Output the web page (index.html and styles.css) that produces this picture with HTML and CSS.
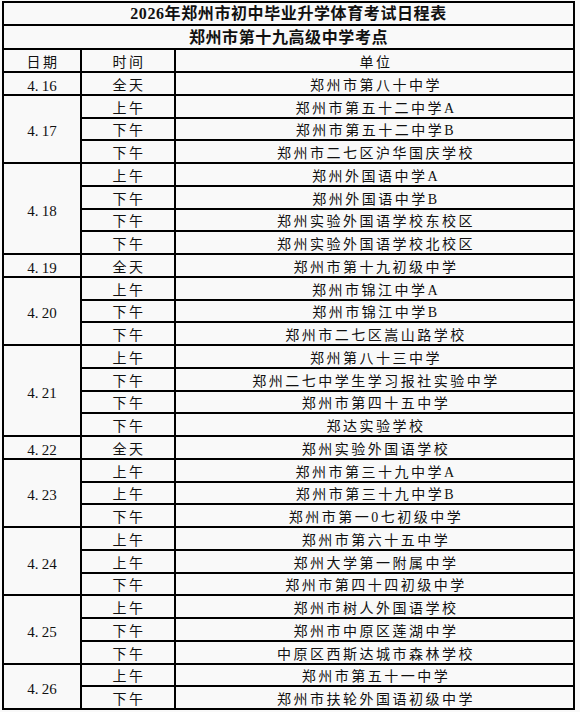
FILE: index.html
```html
<!DOCTYPE html>
<html lang="zh-CN">
<head>
<meta charset="utf-8">
<title>2026年郑州市初中毕业升学体育考试日程表</title>
<link rel="stylesheet" href="styles.css">
</head>
<body>
<table class="sched">
  <colgroup>
    <col class="c-date">
    <col class="c-time">
    <col class="c-unit">
  </colgroup>
  <tbody>
    <tr class="r-title"><td colspan="3" class="title">2026年郑州市初中毕业升学体育考试日程表</td></tr>
    <tr class="r-sub"><td colspan="3" class="title">郑州市第十九高级中学考点</td></tr>
    <tr class="r-head"><td>日期</td><td>时间</td><td class="unit">单位</td></tr>

    <tr><td class="date">4<span class="dot">.</span>16</td><td>全天</td><td class="unit">郑州市第八十中学</td></tr>

    <tr><td class="date" rowspan="3">4<span class="dot">.</span>17</td><td>上午</td><td class="unit">郑州市第五十二中学A</td></tr>
    <tr><td>下午</td><td class="unit">郑州市第五十二中学B</td></tr>
    <tr><td>下午</td><td class="unit">郑州市二七区沪华国庆学校</td></tr>

    <tr><td class="date" rowspan="4">4<span class="dot">.</span>18</td><td>上午</td><td class="unit">郑州外国语中学A</td></tr>
    <tr><td>下午</td><td class="unit">郑州外国语中学B</td></tr>
    <tr><td>下午</td><td class="unit">郑州实验外国语学校东校区</td></tr>
    <tr><td>下午</td><td class="unit">郑州实验外国语学校北校区</td></tr>

    <tr><td class="date">4<span class="dot">.</span>19</td><td>全天</td><td class="unit">郑州市第十九初级中学</td></tr>

    <tr><td class="date" rowspan="3">4<span class="dot">.</span>20</td><td>上午</td><td class="unit">郑州市锦江中学A</td></tr>
    <tr><td>下午</td><td class="unit">郑州市锦江中学B</td></tr>
    <tr><td>下午</td><td class="unit">郑州市二七区嵩山路学校</td></tr>

    <tr><td class="date" rowspan="4">4<span class="dot">.</span>21</td><td>上午</td><td class="unit">郑州第八十三中学</td></tr>
    <tr><td>下午</td><td class="unit">郑州二七中学生学习报社实验中学</td></tr>
    <tr><td>下午</td><td class="unit">郑州市第四十五中学</td></tr>
    <tr><td>下午</td><td class="unit">郑达实验学校</td></tr>

    <tr><td class="date">4<span class="dot">.</span>22</td><td>全天</td><td class="unit">郑州实验外国语学校</td></tr>

    <tr><td class="date" rowspan="3">4<span class="dot">.</span>23</td><td>上午</td><td class="unit">郑州市第三十九中学A</td></tr>
    <tr><td>上午</td><td class="unit">郑州市第三十九中学B</td></tr>
    <tr><td>下午</td><td class="unit">郑州市第一0七初级中学</td></tr>

    <tr><td class="date" rowspan="3">4<span class="dot">.</span>24</td><td>上午</td><td class="unit">郑州市第六十五中学</td></tr>
    <tr><td>上午</td><td class="unit">郑州大学第一附属中学</td></tr>
    <tr><td>下午</td><td class="unit">郑州市第四十四初级中学</td></tr>

    <tr><td class="date" rowspan="3">4<span class="dot">.</span>25</td><td>上午</td><td class="unit">郑州市树人外国语学校</td></tr>
    <tr><td>下午</td><td class="unit">郑州市中原区莲湖中学</td></tr>
    <tr><td>下午</td><td class="unit">中原区西斯达城市森林学校</td></tr>

    <tr><td class="date" rowspan="2">4<span class="dot">.</span>26</td><td>上午</td><td class="unit">郑州市第五十一中学</td></tr>
    <tr><td>下午</td><td class="unit">郑州市扶轮外国语初级中学</td></tr>
  </tbody>
</table>
</body>
</html>
```

FILE: styles.css
```css
html, body {
  margin: 0;
  padding: 0;
  background: #f9f9f9;
}

body {
  font-family: "Liberation Serif", "Noto Sans CJK SC", serif;
  color: #111;
}

.sched {
  border-collapse: separate;
  border-spacing: 0;
  table-layout: fixed;
  width: 573px;
  margin: 1px 0 0 2px;
  border-top: 2px solid #000;
  border-left: 2px solid #000;
}

.c-date { width: 78px; }
.c-time { width: 94px; }
.c-unit { width: 399px; }

.sched td {
  box-sizing: border-box;
  padding: 5px 0 0 2px;
  border-right: 2px solid #000;
  border-bottom: 2px solid #000;
  text-align: center;
  vertical-align: middle;
  font-size: 14px;
  line-height: 14px;
  letter-spacing: 2.5px;
  white-space: nowrap;
  overflow: hidden;
}

.sched tr { height: 22.75px; }
.sched .r-title { height: 23px; }
.sched .r-sub { height: 24px; }
.sched .r-head { height: 23px; }

.sched td.title {
  font-weight: bold;
  font-size: 16px;
  line-height: 16px;
  letter-spacing: 0.6px;
  padding: 1px 0 0 0;
}

.sched td.date {
  font-size: 15px;
  letter-spacing: 0;
  padding: 5px 0 0 0;
}

.dot {
  display: inline-block;
  width: 7px;
  text-align: left;
}

.sched td.unit {
  padding-left: 3px;
}
```
